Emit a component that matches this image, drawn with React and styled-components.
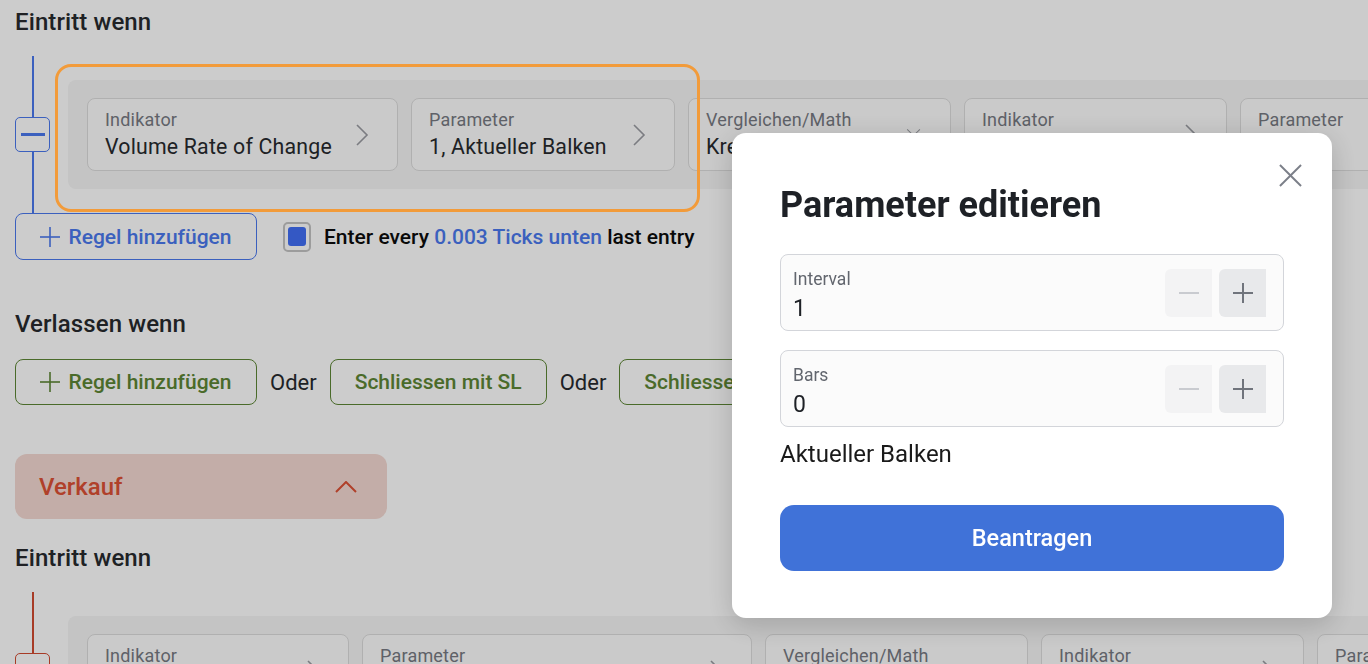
import styled, { createGlobalStyle } from "styled-components";

const GlobalStyle = createGlobalStyle`
  html, body {
    margin: 0;
    padding: 0;
    background: #ffffff;
    font-family: Roboto, "Liberation Sans", Arial, sans-serif;
    color: #272a2e;
  }
`;

const Page = styled.div`
  width: 1368px;
  height: 664px;
  overflow: hidden;
  padding: 8px 0 0 15px;
  box-sizing: border-box;
`;

const Heading = styled.h2`
  margin: ${(p) => p.$top || 0}px 0 0;
  font-size: 24px;
  line-height: 29px;
  font-weight: 500;
  color: #272a2e;
  letter-spacing: 0.1px;
`;

const Tree = styled.div`
  display: grid;
  grid-template-columns: 35px auto;
  column-gap: 18px;
  margin-top: 19px;
  padding: 24px 0;
`;

const Connector = styled.div`
  display: flex;
  flex-direction: column;
  align-items: center;
  margin: -24px 0;
`;

const Stem = styled.div`
  flex: 1;
  width: 2px;
  background: ${(p) => p.$color};
`;

const MinusBox = styled.div`
  width: 35px;
  height: 35px;
  box-sizing: border-box;
  border: 1px solid ${(p) => p.$color};
  border-radius: 5px;
  display: flex;
  align-items: center;
  justify-content: center;
  &::after {
    content: "";
    width: 24px;
    height: 3px;
    background: ${(p) => p.$color};
  }
`;

const Row = styled.div`
  position: relative;
  display: flex;
  gap: 13px;
  padding: 18px 19px;
  background: #f5f5f5;
  border-radius: 8px 0 0 8px;
  width: max-content;
  ${(p) =>
    p.$highlight &&
    `
    &::before {
      content: "";
      position: absolute;
      left: -13px;
      top: -16px;
      width: 645px;
      height: 148px;
      box-sizing: border-box;
      border: 3px solid #f29b3a;
      border-radius: 16px;
      z-index: 20;
      pointer-events: none;
    }
  `}
`;

const Card = styled.div`
  width: ${(p) => p.$w}px;
  height: 73px;
  box-sizing: border-box;
  background: #fdfdfd;
  border: 1px solid #dddddd;
  border-radius: 8px;
  padding: 10px 16px 0 17px;
  display: flex;
  align-items: center;
  gap: 12px;
`;

const CardText = styled.div`
  flex: 1;
  min-width: 0;
  align-self: flex-start;
`;

const CardLabel = styled.div`
  font-size: 18px;
  line-height: 21px;
  color: #777a82;
  letter-spacing: 0.2px;
`;

const CardValue = styled.div`
  margin-top: 4px;
  font-size: 21.3px;
  line-height: 26px;
  color: #272a2e;
  white-space: nowrap;
  letter-spacing: 0.2px;
`;

const CardIcon = styled.svg`
  flex: none;
  width: 14px;
  height: 22px;
  margin-top: -10px;
  margin-right: 12px;
  stroke: #9a9ca2;
  fill: none;
  stroke-width: 1.6;
`;

const Actions = styled.div`
  display: flex;
  align-items: center;
  gap: ${(p) => p.$gap || 13}px;
  margin-top: ${(p) => p.$top || 0}px;
`;

const OutlineButton = styled.button`
  height: ${(p) => p.$h || 47}px;
  width: ${(p) => (p.$w ? p.$w + "px" : "auto")};
  padding: 0 24px;
  box-sizing: border-box;
  background: transparent;
  border: 1px solid ${(p) => p.$color};
  border-radius: 8px;
  color: ${(p) => p.$color};
  font-family: inherit;
  font-size: 21px;
  font-weight: 500;
  display: flex;
  align-items: center;
  justify-content: center;
  gap: 8px;
  flex: none;
  white-space: nowrap;
`;

const PlusIcon = styled.svg`
  width: 20px;
  height: 20px;
  stroke: ${(p) => p.$color};
  stroke-width: ${(p) => p.$sw || 1.6};
  fill: none;
`;

const Checkbox = styled.span`
  width: 28px;
  height: 30px;
  box-sizing: border-box;
  border: 2px solid #c4c4c4;
  border-radius: 5px;
  display: flex;
  align-items: center;
  justify-content: center;
  &::after {
    content: "";
    width: 18px;
    height: 19px;
    border-radius: 3px;
    background: #426ff5;
  }
`;

const EntryText = styled.span`
  font-size: 21px;
  font-weight: 500;
  color: #0c0c0c;
`;

const Accent = styled.span`
  color: #4a78ee;
`;

const OrText = styled.span`
  font-size: 22px;
  color: #272a2e;
`;

const Collapse = styled.div`
  margin-top: 49px;
  width: 372px;
  height: 65px;
  box-sizing: border-box;
  border-radius: 12px;
  background: #f4d9d2;
  padding: 0 30px 0 24px;
  display: flex;
  align-items: center;
  justify-content: space-between;
  color: #dc5035;
  font-size: 24px;
  font-weight: 500;
`;

const ChevronUp = styled.svg`
  width: 22px;
  height: 12px;
  stroke: #dc5035;
  stroke-width: 2;
  fill: none;
`;

const Overlay = styled.div`
  position: fixed;
  inset: 0;
  background: rgba(0, 0, 0, 0.2);
  z-index: 10;
  display: flex;
  justify-content: flex-end;
  align-items: flex-start;
  padding: 133px 36px 0 0;
`;

const Modal = styled.div`
  position: relative;
  z-index: 30;
  width: 600px;
  box-sizing: border-box;
  background: #ffffff;
  border-radius: 14px;
  padding: 51px 48px 47px;
  box-shadow: 0 6px 28px rgba(0, 0, 0, 0.18);
`;

const CloseIcon = styled.svg`
  position: absolute;
  top: 31px;
  right: 30px;
  width: 23px;
  height: 23px;
  stroke: #7b7f88;
  stroke-width: 2;
  fill: none;
`;

const ModalTitle = styled.h1`
  margin: 0 0 28px;
  font-size: 36px;
  line-height: 42px;
  font-weight: 700;
  color: #1e2126;
`;

const Field = styled.div`
  height: 77px;
  box-sizing: border-box;
  border: 1px solid #d3d5da;
  border-radius: 8px;
  background: #fbfbfb;
  padding: 0 17px 0 12px;
  display: flex;
  align-items: center;
  & + & {
    margin-top: 19px;
  }
`;

const FieldText = styled.div`
  flex: 1;
  padding-top: 4px;
`;

const FieldLabel = styled.div`
  font-size: 17.5px;
  line-height: 20px;
  color: #62666e;
`;

const FieldValue = styled.div`
  margin-top: 8px;
  font-size: 23px;
  line-height: 24px;
  color: #1e2126;
`;

const Stepper = styled.div`
  display: flex;
  gap: 7px;
`;

const StepButton = styled.button`
  width: 47px;
  height: 48px;
  border: none;
  border-radius: 6px 0 0 6px;
  background: ${(p) => (p.$active ? "#e8e9eb" : "#f3f3f4")};
  display: flex;
  align-items: center;
  justify-content: center;
  padding: 0;
`;

const Note = styled.div`
  margin-top: 13px;
  font-size: 24px;
  line-height: 28px;
  color: #1a1a1a;
`;

const PrimaryButton = styled.button`
  margin-top: 37px;
  width: 100%;
  height: 66px;
  border: none;
  border-radius: 14px;
  background: #4072d8;
  color: #ffffff;
  font-family: inherit;
  font-size: 23.5px;
  font-weight: 500;
`;

const ChevronRight = () => (
  <CardIcon viewBox="0 0 14 22">
    <polyline points="2,1 12,11 2,21" />
  </CardIcon>
);

const ChevronDown = () => (
  <CardIcon viewBox="0 0 14 22" style={{ width: 22, height: 14 }}>
    <polyline points="1,2 11,12 21,2" />
  </CardIcon>
);

const Plus = ({ color, sw }) => (
  <PlusIcon viewBox="0 0 20 20" $color={color} $sw={sw}>
    <line x1="10" y1="0" x2="10" y2="20" />
    <line x1="0" y1="10" x2="20" y2="10" />
  </PlusIcon>
);

const Minus = ({ color, sw }) => (
  <PlusIcon viewBox="0 0 20 20" $color={color} $sw={sw}>
    <line x1="0" y1="10" x2="20" y2="10" />
  </PlusIcon>
);

const RuleCard = ({ w, label, value, icon }) => (
  <Card $w={w}>
    <CardText>
      <CardLabel>{label}</CardLabel>
      <CardValue>{value}</CardValue>
    </CardText>
    {icon === "down" ? <ChevronDown /> : icon === "right" ? <ChevronRight /> : null}
  </Card>
);

const RuleTree = ({ color, cards, highlight }) => (
  <Tree>
    <Connector>
      <Stem $color={color} />
      <MinusBox $color={color} />
      <Stem $color={color} />
    </Connector>
    <Row $highlight={highlight}>
      {cards.map((c, i) => (
        <RuleCard key={i} {...c} />
      ))}
    </Row>
  </Tree>
);

const buyCards = [
  { w: 311, label: "Indikator", value: "Volume Rate of Change", icon: "right" },
  { w: 264, label: "Parameter", value: "1, Aktueller Balken", icon: "right" },
  { w: 263, label: "Vergleichen/Math", value: "Kreuzt über", icon: "down" },
  { w: 263, label: "Indikator", value: "Wert", icon: "right" },
  { w: 263, label: "Parameter", value: "0", icon: "right" },
];

const sellCards = [
  { w: 262, label: "Indikator", value: "Volume Rate of Change", icon: "right" },
  { w: 390, label: "Parameter", value: "1, Aktueller Balken", icon: "right" },
  { w: 263, label: "Vergleichen/Math", value: "Kreuzt unter", icon: "down" },
  { w: 263, label: "Indikator", value: "Wert", icon: "right" },
  { w: 263, label: "Parameter", value: "0", icon: "right" },
];

const StepField = ({ label, value }) => (
  <Field>
    <FieldText>
      <FieldLabel>{label}</FieldLabel>
      <FieldValue>{value}</FieldValue>
    </FieldText>
    <Stepper>
      <StepButton>
        <Minus color="#c9cbd0" sw={2} />
      </StepButton>
      <StepButton $active>
        <Plus color="#70747c" sw={2} />
      </StepButton>
    </Stepper>
  </Field>
);

export default function App() {
  return (
    <>
      <GlobalStyle />
      <Page>
        <Heading>Eintritt wenn</Heading>
        <RuleTree color="#4a78ee" cards={buyCards} highlight />
        <Actions $gap={26}>
          <OutlineButton $color="#4a78ee" $w={242}>
            <Plus color="#4a78ee" />
            Regel hinzufügen
          </OutlineButton>
          <Actions>
            <Checkbox />
            <EntryText>
              Enter every <Accent>0.003 Ticks unten</Accent> last entry
            </EntryText>
          </Actions>
        </Actions>

        <Heading $top={50}>Verlassen wenn</Heading>
        <Actions $top={20}>
          <OutlineButton $color="#5d8635" $w={242} $h={46}>
            <Plus color="#5d8635" />
            Regel hinzufügen
          </OutlineButton>
          <OrText>Oder</OrText>
          <OutlineButton $color="#5d8635" $h={46}>
            Schliessen mit SL
          </OutlineButton>
          <OrText>Oder</OrText>
          <OutlineButton $color="#5d8635" $h={46}>
            Schliessen mit TP
          </OutlineButton>
        </Actions>

        <Collapse>
          Verkauf
          <ChevronUp viewBox="0 0 22 12">
            <polyline points="1,11 11,1 21,11" />
          </ChevronUp>
        </Collapse>

        <Heading $top={25}>Eintritt wenn</Heading>
        <RuleTree color="#d14a30" cards={sellCards} />
      </Page>

      <Overlay>
        <Modal>
          <CloseIcon viewBox="0 0 24 24">
            <line x1="1" y1="1" x2="23" y2="23" />
            <line x1="23" y1="1" x2="1" y2="23" />
          </CloseIcon>
          <ModalTitle>Parameter editieren</ModalTitle>
          <StepField label="Interval" value="1" />
          <StepField label="Bars" value="0" />
          <Note>Aktueller Balken</Note>
          <PrimaryButton>Beantragen</PrimaryButton>
        </Modal>
      </Overlay>
    </>
  );
}
